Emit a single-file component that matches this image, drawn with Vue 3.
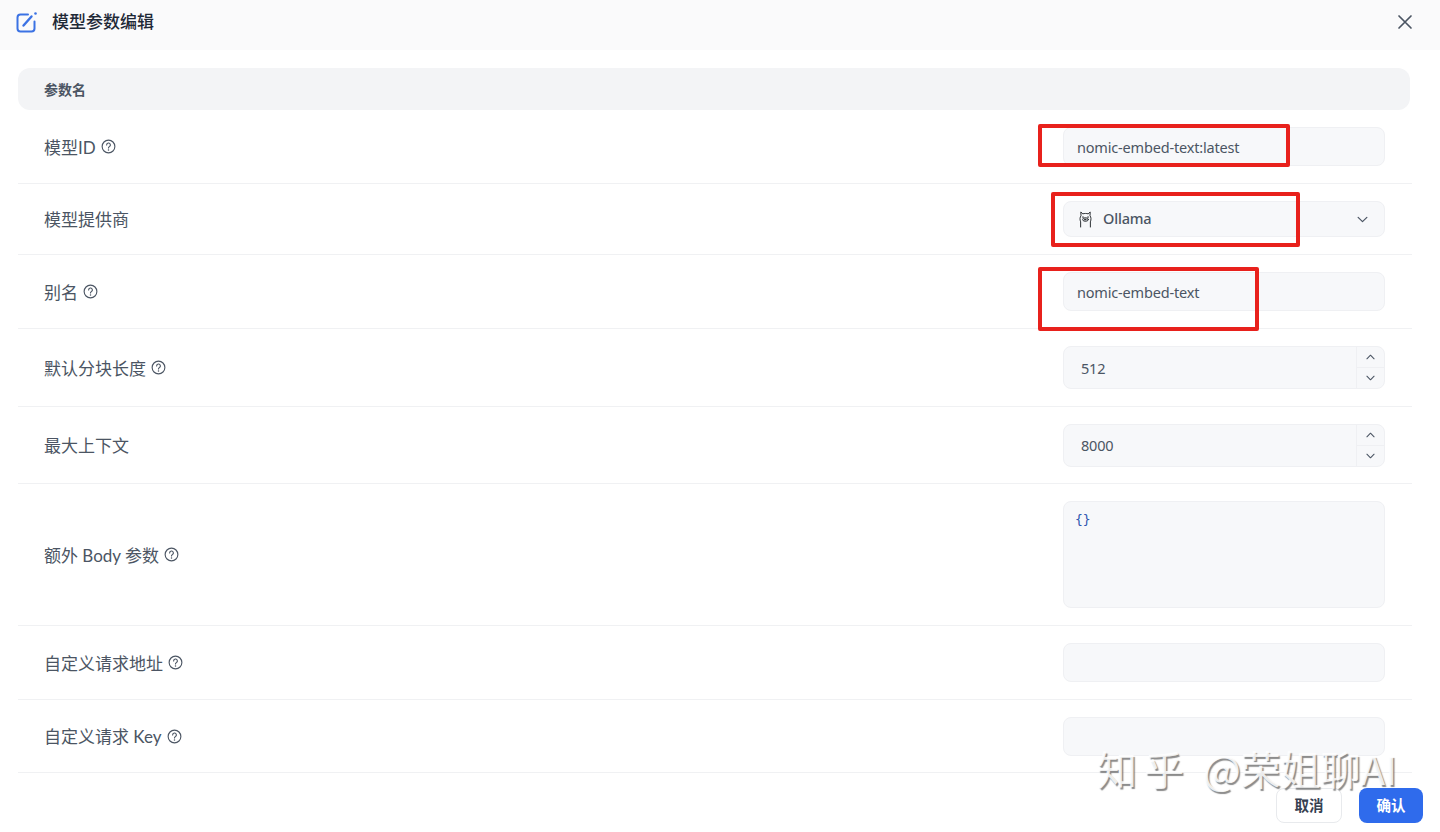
<script setup>
const rows = [
  { label: '模型ID', help: true, kind: 'input', value: 'nomic-embed-text:latest', cls: 'r74' },
  { label: '模型提供商', kind: 'select', value: 'Ollama', cls: 'r71' },
  { label: '别名', help: true, kind: 'input', value: 'nomic-embed-text', cls: 'r74' },
  { label: '默认分块长度', help: true, kind: 'number', value: '512', cls: 'r78' },
  { label: '最大上下文', kind: 'number', value: '8000', cls: 'r77' },
  { label: '额外 Body 参数', help: true, kind: 'area', value: '{}', cls: 'r142' },
  { label: '自定义请求地址', help: true, kind: 'input', value: '', cls: 'r74' },
  { label: '自定义请求 Key', help: true, kind: 'input', value: '', cls: 'r73' },
]
const marks = ['m1', 'm2', 'm3']
</script>

<template>
  <div class="page">
    <header class="head">
      <div class="title">
        <svg class="edit" viewBox="0 0 22 22" width="22" height="22" fill="none" stroke="#3b72e4" stroke-width="2" stroke-linecap="round" stroke-linejoin="round">
          <path d="M12 3.500H4.500A3 3 0 0 0 1.500 6.500V17.500A3 3 0 0 0 4.500 20.500H15.500A3 3 0 0 0 18.500 17.500V10.500" />
          <path d="M7.500 14.500L15.500 5.500" stroke-width="2.400" />
          <circle cx="19.500" cy="2.500" r="1.300" fill="#3b72e4" stroke="none" />
        </svg>
        <span class="title-text">模型参数编辑</span>
      </div>
      <svg class="close" viewBox="0 0 16 16" width="16" height="16" fill="none" stroke="#4b5563" stroke-width="1.700" stroke-linecap="round">
        <path d="M2 2L14 14M14 2L2 14" />
      </svg>
    </header>

    <main class="body">
      <div class="thead"><span>参数名</span></div>
      <div v-for="row in rows" :key="row.label" class="row" :class="row.cls">
        <div class="label">
          <span class="label-text">{{ row.label }}</span>
          <svg v-if="row.help" viewBox="0 0 16 16" width="15" height="15" fill="none" stroke="#4b5563" stroke-width="1.200" stroke-linecap="round">
            <circle cx="8" cy="8" r="6.800" />
            <path d="M6 6.300A2 2 0 1 1 8.900 8.100C8.300 8.500 8 8.800 8 9.600" />
            <circle cx="8" cy="11.600" r=".8" fill="#4b5563" stroke="none" />
          </svg>
        </div>

        <div v-if="row.kind === 'input'" class="control input">{{ row.value }}</div>

        <div v-else-if="row.kind === 'select'" class="control select">
          <svg class="llama" viewBox="0 0 16 18" width="15" height="17" fill="none" stroke="#1f2328" stroke-width="1" stroke-linecap="round" stroke-linejoin="round">
            <path d="M2.800 17V11.500C1.800 9 2 6.500 3.200 5L3 1L5.200 3C6.800 2.400 9.200 2.400 10.800 3L13 1L12.800 5C14 6.500 14.200 9 13.200 11.500V17" />
            <ellipse cx="8" cy="9" rx="3" ry="1.900" />
            <path d="M7.200 8.600H8.800L8 9.500Z" fill="#1f2328" />
            <path d="M5.300 6.300V6.500M10.700 6.300V6.500" stroke-width="1.500" />
          </svg>
          <span class="sel-text">Ollama</span>
          <svg class="chev" viewBox="0 0 12 8" width="11" height="7" fill="none" stroke="#4b5563" stroke-width="1.400" stroke-linecap="round" stroke-linejoin="round">
            <path d="M1 1.500L6 6.500L11 1.500" />
          </svg>
        </div>

        <div v-else-if="row.kind === 'number'" class="control number">
          <span class="num">{{ row.value }}</span>
          <div class="spin">
            <div class="step">
              <svg viewBox="0 0 10 6" width="9" height="6" fill="none" stroke="#4b5563" stroke-width="1.200" stroke-linecap="round" stroke-linejoin="round"><path d="M1 5L5 1L9 5" /></svg>
            </div>
            <div class="step">
              <svg viewBox="0 0 10 6" width="9" height="6" fill="none" stroke="#4b5563" stroke-width="1.200" stroke-linecap="round" stroke-linejoin="round"><path d="M1 1L5 5L9 1" /></svg>
            </div>
          </div>
        </div>

        <div v-else class="control area">{{ row.value }}</div>
      </div>

      <footer class="foot">
        <button class="btn ghost">取消</button>
        <button class="btn primary">确认</button>
      </footer>
    </main>

    <div v-for="m in marks" :key="m" class="mark" :class="m"></div>
    <div class="watermark"><span class="wm-a">知乎</span><span class="wm-b">@荣姐聊AI</span></div>
  </div>
</template>

<style scoped>
.page {
  position: relative;
  width: 1440px;
  height: 832px;
  overflow: hidden;
  background: #fff;
  color: #4b5563;
  font-family: "Noto Sans", "Noto Sans CJK SC", sans-serif;
}
.head {
  height: 50px;
  background: #fafafb;
  display: flex;
  align-items: center;
  justify-content: space-between;
  padding: 0 27px 6px 16px;
  box-sizing: border-box;
}
.title {
  display: flex;
  align-items: center;
  gap: 14px;
  font-size: 17px;
  font-weight: 500;
  color: #1f2937;
}
.title-text {
  margin-top: -3px;
}
.body {
  padding: 18px 28px 0 18px;
}
.thead {
  height: 42px;
  box-sizing: border-box;
  padding: 0 0 1px 26px;
  display: flex;
  align-items: center;
  background: #f3f4f6;
  border-radius: 12px;
  font-size: 14px;
  font-weight: 700;
  color: #4b5563;
  width: 1392px;
}
.row {
  width: 1394px;
  box-sizing: border-box;
  display: flex;
  align-items: center;
  justify-content: space-between;
  padding: 0 27px 0 26px;
  border-bottom: 1px solid #f0f1f3;
}
.r71 { height: 71px; }
.r73 { height: 73px; }
.r74 { height: 74px; }
.r77 { height: 77px; }
.r78 { height: 78px; }
.r142 { height: 142px; }
.label {
  display: flex;
  align-items: center;
  gap: 5px;
  font-family: Lato, "Noto Sans CJK SC", sans-serif;
  font-size: 17px;
  color: #4b5563;
}
.label-text {
  margin-top: -1px;
}
.control {
  width: 322px;
  box-sizing: border-box;
  background: #f7f8fa;
  border: 1px solid #eff0f3;
  border-radius: 8px;
  font-size: 14.5px;
  letter-spacing: -.18px;
  color: #4b5563;
}
.input {
  height: 39px;
  line-height: 39px;
  padding-left: 13px;
}
.select {
  height: 36px;
  display: flex;
  align-items: center;
  padding: 0 16px 0 14px;
}
.sel-text {
  margin: -2px 0 0 10px;
  font-weight: 500;
  flex: 1;
}
.number {
  height: 43px;
  display: flex;
  align-items: center;
  justify-content: space-between;
}
.num {
  padding-left: 17px;
}
.spin {
  width: 27px;
  height: 100%;
  border-left: 1px solid #eff0f3;
  display: flex;
  flex-direction: column;
}
.step {
  flex: 1;
  display: flex;
  align-items: center;
  justify-content: center;
}
.step + .step {
  border-top: 1px solid #eff0f3;
}
.area {
  height: 107px;
  padding: 10px 11px;
  font-family: "DejaVu Sans Mono", monospace;
  font-size: 13px;
  letter-spacing: 0;
  color: #2f55b0;
}
.foot {
  display: flex;
  justify-content: flex-end;
  gap: 17px;
  margin: 15px -11px 0 0;
}
.btn {
  height: 35px;
  border-radius: 8px;
  font-family: inherit;
  font-size: 14.500px;
  font-weight: 700;
  padding: 0 0 3px;
}
.ghost {
  width: 66px;
  background: #fff;
  border: 1px solid #e8eaed;
  color: #374151;
}
.primary {
  width: 64px;
  background: #2f6bec;
  border: 0;
  color: #fff;
}
.mark {
  position: absolute;
  border: 4px solid #e8211c;
  border-radius: 2px;
  box-sizing: border-box;
}
.m1 { left: 1038px; top: 124px; width: 252px; height: 43px; }
.m2 { left: 1051px; top: 192px; width: 249px; height: 55px; }
.m3 { left: 1038px; top: 267px; width: 221px; height: 64px; }
.watermark {
  position: absolute;
  left: 1097px;
  top: 748px;
  display: flex;
  font-family: "Noto Sans CJK SC", sans-serif;
  font-size: 40px;
  line-height: 40px;
  color: rgba(255, 255, 255, .85);
  text-shadow: 1.500px 1.500px 1px rgba(110, 110, 110, .8);
  white-space: nowrap;
}
.wm-a {
  letter-spacing: 7px;
}
.wm-b {
  margin-left: 12px;
}
</style>
